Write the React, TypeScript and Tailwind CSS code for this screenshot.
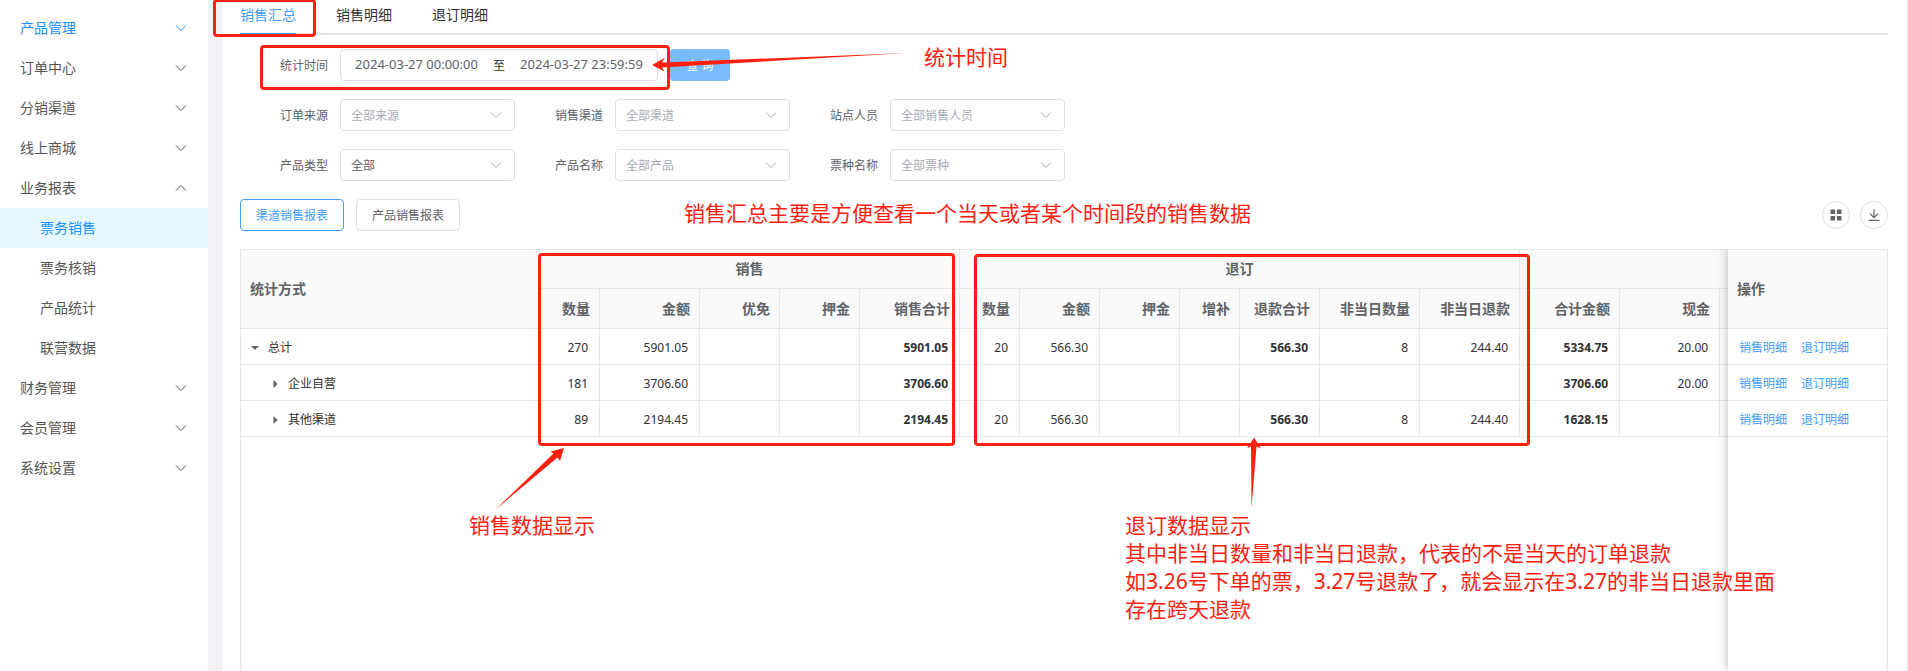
import { ReactNode, useState } from 'react';

type MenuItem = { label: string; open?: boolean; active?: boolean; children?: string[] };

const menu: MenuItem[] = [
  { label: '产品管理', active: true },
  { label: '订单中心' },
  { label: '分销渠道' },
  { label: '线上商城' },
  { label: '业务报表', open: true, children: ['票务销售', '票务核销', '产品统计', '联营数据'] },
  { label: '财务管理' },
  { label: '会员管理' },
  { label: '系统设置' },
];

const tabs = ['销售汇总', '销售明细', '退订明细'];

const filters = [
  [
    { id: 'source', label: '订单来源', value: '全部来源' },
    { id: 'channel', label: '销售渠道', value: '全部渠道' },
    { id: 'staff', label: '站点人员', value: '全部销售人员' },
  ],
  [
    { id: 'type', label: '产品类型', value: '全部', selected: true },
    { id: 'product', label: '产品名称', value: '全部产品' },
    { id: 'ticket', label: '票种名称', value: '全部票种' },
  ],
];

const columns = [
  { label: '数量', width: 60 },
  { label: '金额', width: 100 },
  { label: '优免', width: 80 },
  { label: '押金', width: 80 },
  { label: '销售合计', width: 100, bold: true },
  { label: '数量', width: 60 },
  { label: '金额', width: 80 },
  { label: '押金', width: 80 },
  { label: '增补', width: 60 },
  { label: '退款合计', width: 80, bold: true },
  { label: '非当日数量', width: 100 },
  { label: '非当日退款', width: 100 },
  { label: '合计金额', width: 100, bold: true },
  { label: '现金', width: 100 },
  { label: '', width: 100 },
];

const rows = [
  {
    name: '总计',
    level: 0,
    cells: ['270', '5901.05', '', '', '5901.05', '20', '566.30', '', '', '566.30', '8', '244.40', '5334.75', '20.00', ''],
  },
  {
    name: '企业自营',
    level: 1,
    cells: ['181', '3706.60', '', '', '3706.60', '', '', '', '', '', '', '', '3706.60', '20.00', ''],
  },
  {
    name: '其他渠道',
    level: 1,
    cells: ['89', '2194.45', '', '', '2194.45', '20', '566.30', '', '', '566.30', '8', '244.40', '1628.15', '', ''],
  },
];

function Chevron({ up, className }: { up?: boolean; className?: string }) {
  return (
    <svg viewBox="0 0 12 12" fill="none" stroke="currentColor" className={`w-3 h-3 ${className ?? ''}`} aria-hidden="true">
      <path d={up ? 'M1 8.5 6 3.5l5 5' : 'M1 3.5l5 5 5-5'} />
    </svg>
  );
}

function Sidebar() {
  return (
    <nav className="w-52 shrink-0 pt-2 text-sm">
      <ul>
        {menu.map((item) => (
          <li key={item.label}>
            <button
              className={`flex h-10 w-full items-center justify-between pl-5 pr-[21px] ${item.active ? 'text-[#1890ff]' : 'text-[#555555]'}`}
              aria-expanded={!!item.open}
            >
              {item.label}
              <Chevron up={item.open} />
            </button>
            {item.children && (
              <ul>
                {item.children.map((child, i) => (
                  <li key={child}>
                    <a
                      href="#"
                      className={`flex h-10 items-center pl-10 ${i === 0 ? 'bg-[#e6f7ff] text-[#1890ff]' : 'text-[#555555]'}`}
                    >
                      {child}
                    </a>
                  </li>
                ))}
              </ul>
            )}
          </li>
        ))}
      </ul>
    </nav>
  );
}

function Filters() {
  return (
    <form className="mt-[14px] flex flex-col gap-[18px] text-xs text-[#606266]" onSubmit={(e) => e.preventDefault()}>
      <div className="flex items-center">
        <label htmlFor="start" className="w-[100px] pr-3 pt-[2px] text-right">统计时间</label>
        <div className="flex h-8 w-[318px] items-center rounded border border-[#dcdfe6] px-[5px]">
          <input id="start" className="min-w-0 flex-1 text-center text-[13px] outline-none" defaultValue="2024-03-27 00:00:00" />
          <span className="w-6 pt-[2px] text-center text-[#303133]">至</span>
          <input aria-label="结束时间" className="min-w-0 flex-1 text-center text-[13px] outline-none" defaultValue="2024-03-27 23:59:59" />
        </div>
        <button className="ml-3 h-8 w-[60px] rounded bg-[#79bbff] pt-[2px] text-white">查 询</button>
      </div>
      {filters.map((line, i) => (
        <div key={i} className="flex">
          {line.map((f) => (
            <div key={f.id} className="flex items-center">
              <label htmlFor={f.id} className="w-[100px] pr-3 pt-[2px] text-right">{f.label}</label>
              <div className="relative">
                <select
                  id={f.id}
                  className={`h-8 w-[175px] appearance-none rounded border border-[#dcdfe6] bg-white px-[10px] pt-[2px] outline-none ${f.selected ? 'text-[#606266]' : 'text-[#a8abb2]'}`}
                >
                  <option>{f.value}</option>
                </select>
                <Chevron className="pointer-events-none absolute right-[13px] top-[10px] text-[#a8abb2]" />
              </div>
            </div>
          ))}
        </div>
      ))}
    </form>
  );
}

function Toolbar() {
  const [report, setReport] = useState(0);
  return (
    <div className="mt-[18px] flex h-8 items-center gap-3 text-xs text-[#606266]">
      {['渠道销售报表', '产品销售报表'].map((label, i) => (
        <button
          key={label}
          onClick={() => setReport(i)}
          className={`h-8 w-[104px] rounded border pt-[2px] ${report === i ? 'border-[#409eff] text-[#409eff]' : 'border-[#dcdfe6]'}`}
        >
          {label}
        </button>
      ))}
      <div className="ml-auto flex gap-[10px]">
        <button aria-label="列设置" className="flex h-7 w-7 items-center justify-center rounded-full border border-[#dcdfe6]">
          <svg viewBox="0 0 12 12" fill="currentColor" className="h-3 w-3">
            <path d="M0.5 0.5h4.600v4.600h-4.600zM6.900 0.5h4.600v4.600h-4.600zM0.5 6.900h4.600v4.600h-4.600zM6.900 6.900h4.600v4.600h-4.600z" />
          </svg>
        </button>
        <button aria-label="下载" className="flex h-7 w-7 items-center justify-center rounded-full border border-[#dcdfe6]">
          <svg viewBox="0 0 12 12" fill="none" stroke="currentColor" strokeWidth="1.2" className="h-3 w-3">
            <path d="M6 0.5v8M2 4.700l4 4 4-4M0.5 11.400h11" />
          </svg>
        </button>
      </div>
    </div>
  );
}

function Th({ children, className, ...rest }: { children?: ReactNode; className?: string; colSpan?: number; rowSpan?: number }) {
  return (
    <th {...rest} className={`border-b border-[#e8e8e8] bg-[#fafafa] px-[9px] font-bold ${className ?? ''}`}>
      {children}
    </th>
  );
}

function ReportTable() {
  return (
    <div className="mt-[18px] flex flex-1 overflow-hidden border-r border-[#e8e8e8] text-[#606266]">
      <div className="flex-1 overflow-hidden border-l border-[#e8e8e8]">
        <table className="w-[1579px] table-fixed border-separate border-spacing-0 border-t border-[#e8e8e8] text-sm">
          <colgroup>
            <col className="w-[299px]" />
            {columns.map((c, i) => (
              <col key={i} style={{ width: c.width }} />
            ))}
          </colgroup>
          <thead>
            <tr className="h-[39px]">
              <Th rowSpan={2} className="border-r text-left">统计方式</Th>
              <Th colSpan={5} className="border-r">销售</Th>
              <Th colSpan={7} className="border-r">退订</Th>
              <Th colSpan={3} />
            </tr>
            <tr className="h-10">
              {columns.map((c, i) => (
                <Th key={i} className="whitespace-nowrap border-r text-right">{c.label}</Th>
              ))}
            </tr>
          </thead>
          <tbody className="text-xs text-[#303133]">
            {rows.map((row) => (
              <tr key={row.name} className="h-9">
                <td className="border-b border-r border-[#e8e8e8] pt-[2px]">
                  <button className={`flex items-center ${row.level ? 'pl-[30px]' : 'pl-[10px]'}`} aria-expanded={!row.level}>
                    <svg viewBox="0 0 8 8" fill="#606266" className="mr-[9px] h-2 w-2">
                      <path d={row.level ? 'M2.500 0v8L6.500 4z' : 'M0 2h8L4 6z'} />
                    </svg>
                    {row.name}
                  </button>
                </td>
                {row.cells.map((cell, i) => (
                  <td
                    key={i}
                    className={`border-b border-r border-[#e8e8e8] pr-[11px] pt-[2px] text-right ${columns[i].bold ? 'font-bold' : ''}`}
                  >
                    {cell}
                  </td>
                ))}
              </tr>
            ))}
          </tbody>
        </table>
      </div>
      {/* pinned column */}
      <div className="relative w-[159px] shrink-0 bg-white shadow-[0_0_10px_rgba(0,0,0,0.3)]">
        <table className="w-full table-fixed border-separate border-spacing-0 border-t border-[#e8e8e8] text-sm">
          <thead>
            <tr className="h-[79px]">
              <Th className="text-left">操作</Th>
            </tr>
          </thead>
          <tbody className="text-xs text-[#409eff]">
            {rows.map((row) => (
              <tr key={row.name} className="h-9">
                <td className="border-b border-[#e8e8e8] pl-[11px] pt-[2px]">
                  <a href="#" className="mr-[14px]">销售明细</a>
                  <a href="#">退订明细</a>
                </td>
              </tr>
            ))}
          </tbody>
        </table>
      </div>
    </div>
  );
}

// marker boxes, arrows and notes drawn over the page
function Annotations() {
  return (
    <div className="pointer-events-none absolute inset-0 overflow-hidden text-[21px] leading-7 text-[#ff2110] whitespace-nowrap">
      <div className="absolute left-[213px] top-[-1px] h-[38px] w-[103px] rounded border-[3px] border-[#ff2110]" />
      <div className="absolute left-[260px] top-[45px] h-[45px] w-[410px] rounded border-[3px] border-[#ff2110]" />
      <div className="absolute left-[538px] top-[253px] h-[193px] w-[417px] rounded border-[3px] border-[#ff2110]" />
      <div className="absolute left-[974px] top-[254px] h-[192px] w-[556px] rounded border-[3px] border-[#ff2110]" />
      <svg viewBox="0 0 1908 671" width="1908" height="671" fill="#ff2110" className="absolute left-0 top-0 max-w-none">
        <path d="M652 65 664.500 58 662 62.500 908 53 662 67.500 664.500 71.500z" />
        <path d="M564 448 560 461 557.500 457.500 495 510 553.500 453.500 550.500 451.500z" />
        <path d="M1254 437.500 1261 448.500 1256.500 446.500 1251.500 508 1251 446.500 1247 448.500z" />
      </svg>
      <p className="absolute left-[924px] top-[43px]">统计时间</p>
      <p className="absolute left-[684px] top-[199px]">销售汇总主要是方便查看一个当天或者某个时间段的销售数据</p>
      <p className="absolute left-[469px] top-[511px]">销售数据显示</p>
      <p className="absolute left-[1125px] top-[511px]">
        退订数据显示
        <br />
        其中非当日数量和非当日退款，代表的不是当天的订单退款
        <br />
        如3.26号下单的票，3.27号退款了，就会显示在3.27的非当日退款里面
        <br />
        存在跨天退款
      </p>
    </div>
  );
}

function App() {
  const [tab, setTab] = useState(0);
  return (
    <div className="relative flex min-h-screen bg-white font-['Noto_Sans','Noto_Sans_CJK_SC',sans-serif]">
      <Sidebar />
      <div className="w-[14px] shrink-0 bg-[#f0f2f5]" />
      <main className="flex min-w-0 flex-1 flex-col border-r-2 border-[#f2f2f2] px-[18px]">
        <div role="tablist" className="flex h-[35px] shrink-0 gap-10 border-b-2 border-[#e4e7ed] text-sm text-[#303133]">
          {tabs.map((label, i) => (
            <button
              key={label}
              role="tab"
              aria-selected={tab === i}
              onClick={() => setTab(i)}
              className={`-mb-[2px] h-[35px] border-b-2 pb-1 ${tab === i ? 'border-[#409eff] text-[#409eff]' : 'border-transparent'}`}
            >
              {label}
            </button>
          ))}
        </div>
        <Filters />
        <Toolbar />
        <ReportTable />
      </main>
      <Annotations />
    </div>
  );
}

export default App;
